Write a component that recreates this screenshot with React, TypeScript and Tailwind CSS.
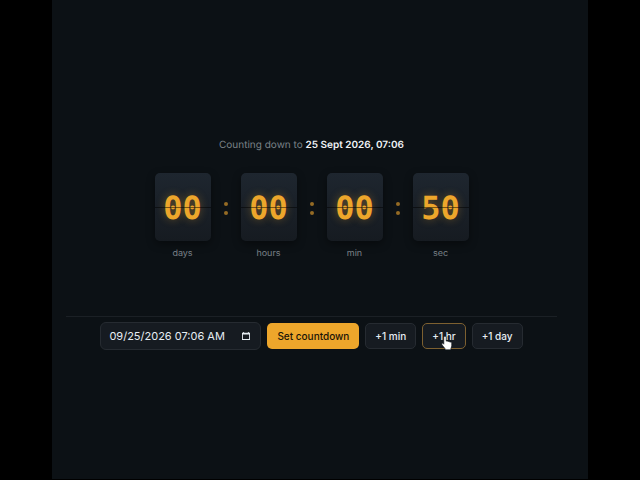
import { useState } from 'react'

const UNITS = [
  { label: 'days', value: '00' },
  { label: 'hours', value: '00' },
  { label: 'min', value: '00' },
  { label: 'sec', value: '50' },
]

const PRESETS = ['+1 min', '+1 hr', '+1 day']

export default function App() {
  const [target, setTarget] = useState('09/25/2026 07:06 AM')

  return (
    <div className="flex min-h-screen justify-center bg-black px-[52px] pb-px font-['Inter',sans-serif] text-[#e6edf3] [text-rendering:geometricPrecision]">
      <main className="flex w-full flex-col bg-[#0c1115] pt-[136px] pr-[31px] pl-[14px]">
        <p className="text-center text-[10px] leading-[18px] text-[#7a8188]">
          Counting down to <strong className="font-semibold text-[#f0f3f6]">25 Sept 2026, 07:06</strong>
        </p>

        <div className="mt-[19px] flex justify-center">
          {UNITS.map((unit, i) => (
            <div key={unit.label} className="flex">
              {i > 0 && <Colon />}
              <FlipCard {...unit} />
            </div>
          ))}
        </div>

        <form
          onSubmit={(e) => e.preventDefault()}
          className="mt-[54px] flex items-center justify-center gap-1.5 border-t border-[#1b2025] pt-[5px] text-[10px] font-medium"
        >
          <div className="relative">
            <input
              type="text"
              aria-label="Target date"
              value={target}
              onChange={(e) => setTarget(e.target.value)}
              className="block h-7 w-[161px] rounded-md border border-[#262b31] bg-[#161b21] px-2 text-[11px] font-normal text-[#e6edf3]"
            />
            <CalendarIcon />
          </div>
          <button type="submit" className="h-[26px] rounded-[5px] bg-[#eda62b] px-[10px] text-[#1a1408]">
            Set countdown
          </button>
          {PRESETS.map((label) => (
            <Preset key={label} label={label} hovered={label === '+1 hr'} />
          ))}
        </form>
      </main>
    </div>
  )
}

function FlipCard({ label, value }: { label: string; value: string }) {
  return (
    <div className="flex w-14 flex-col items-center">
      <div className="relative flex h-[68px] w-full items-center justify-center rounded-[5px] bg-linear-to-b from-[#1e262f] to-[#161b21] pt-0.5 shadow-[0_3px_8px_rgba(0,0,0,0.4)]">
        <span className="font-['DejaVu_Sans_Mono',monospace] text-[32px] leading-none font-bold text-[#eda62b] [text-shadow:0_0_8px_rgba(237,166,43,0.35)]">
          {value}
        </span>
        {/* hinge */}
        <span className="absolute inset-x-0 top-1/2 h-px bg-black/50" />
      </div>
      <span className="mt-[5px] text-[9px] leading-4 text-[#7a8188]">{label}</span>
    </div>
  )
}

function Colon() {
  return (
    <div className="flex h-[70px] w-[30px] flex-col items-center justify-center gap-[5px]">
      <span className="size-1 rounded-full bg-[#956b24]" />
      <span className="size-1 rounded-full bg-[#956b24]" />
    </div>
  )
}

function CalendarIcon() {
  return (
    <svg viewBox="0 0 8 8" className="pointer-events-none absolute top-[10px] right-[11px] size-2" aria-hidden="true">
      <path fill="#e6edf3" fillRule="evenodd" d="M0 .7h1.2V0h.9v.7h3.8V0h.9v.7H8V8H0zM.9 2.6v4.5h6.2V2.6z" />
    </svg>
  )
}

function Preset({ label, hovered }: { label: string; hovered: boolean }) {
  return (
    <button
      type="button"
      className={
        'relative h-[26px] rounded-[5px] border bg-[#161b21] px-[9px] text-[#e6edf3] ' +
        (hovered ? 'border-[#7d6030]' : 'border-[#262b31]')
      }
    >
      {label}
      {hovered && <HandCursor />}
    </button>
  )
}

function HandCursor() {
  return (
    <svg viewBox="0 0 12 16" className="absolute top-[11px] left-[18px] h-4 w-3" aria-hidden="true">
      <path
        d="M4 1.2c.8 0 1.2.5 1.2 1.2v3.8c.3-.4 1.7-.4 1.9.4.5-.4 1.7-.2 1.8.6.6-.3 1.8 0 1.8 1v2.6c0 1.2-.8 2-.9 3.2v.8H4.2V14c-.5-1.3-2.6-3-3.4-4.7-.3-1 .8-1.5 1.5-.7l.5.6V2.4c0-.7.5-1.2 1.2-1.2z"
        fill="#fff"
        stroke="#0c1115"
        strokeWidth=".6"
      />
    </svg>
  )
}
